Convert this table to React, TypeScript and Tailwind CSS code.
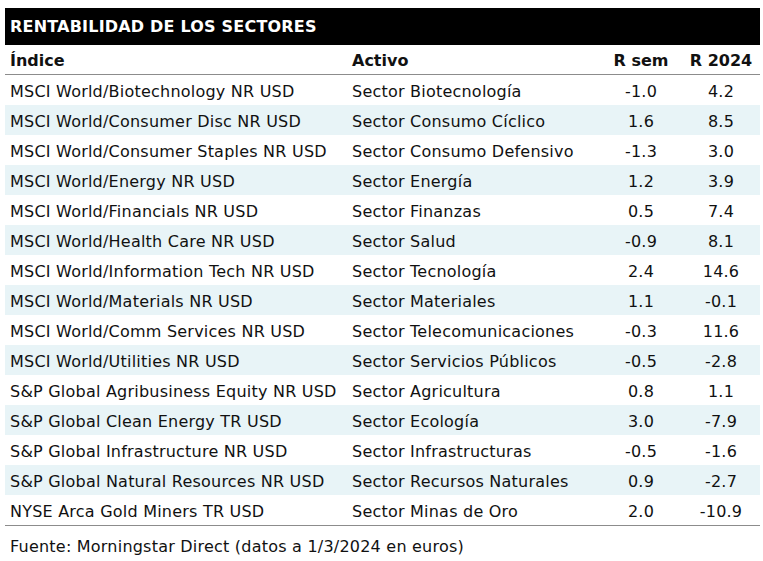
const rows: [string, string, string, string][] = [
  ["MSCI World/Biotechnology NR USD", "Sector Biotecnología", "-1.0", "4.2"],
  ["MSCI World/Consumer Disc NR USD", "Sector Consumo Cíclico", "1.6", "8.5"],
  ["MSCI World/Consumer Staples NR USD", "Sector Consumo Defensivo", "-1.3", "3.0"],
  ["MSCI World/Energy NR USD", "Sector Energía", "1.2", "3.9"],
  ["MSCI World/Financials NR USD", "Sector Finanzas", "0.5", "7.4"],
  ["MSCI World/Health Care NR USD", "Sector Salud", "-0.9", "8.1"],
  ["MSCI World/Information Tech NR USD", "Sector Tecnología", "2.4", "14.6"],
  ["MSCI World/Materials NR USD", "Sector Materiales", "1.1", "-0.1"],
  ["MSCI World/Comm Services NR USD", "Sector Telecomunicaciones", "-0.3", "11.6"],
  ["MSCI World/Utilities NR USD", "Sector Servicios Públicos", "-0.5", "-2.8"],
  ["S&P Global Agribusiness Equity NR USD", "Sector Agricultura", "0.8", "1.1"],
  ["S&P Global Clean Energy TR USD", "Sector Ecología", "3.0", "-7.9"],
  ["S&P Global Infrastructure NR USD", "Sector Infrastructuras", "-0.5", "-1.6"],
  ["S&P Global Natural Resources NR USD", "Sector Recursos Naturales", "0.9", "-2.7"],
  ["NYSE Arca Gold Miners TR USD", "Sector Minas de Oro", "2.0", "-10.9"],
];

export default function App() {
  return (
    <div className="w-[763px] h-[561px] bg-white pt-2 pl-[5px] pr-[3px] text-[16px] text-[#111] font-['DejaVu_Sans',Verdana,sans-serif]">
      <div className="h-[37px] bg-black text-white font-bold tracking-[0.2px] flex items-center pl-[5px] pt-[1px]">
        RENTABILIDAD DE LOS SECTORES
      </div>
      <div className="grid grid-cols-[347px_248px_82px_78px] h-[30px] items-center pt-[2px] font-bold border-b border-[#8c8c8c]">
        <div className="pl-[5px]">Índice</div>
        <div>Activo</div>
        <div className="text-center">R sem</div>
        <div className="text-center">R 2024</div>
      </div>
      <div className="border-b border-[#8c8c8c] tracking-[0.22px]">
        {rows.map((r, i) => (
          <div
            key={i}
            className={`grid grid-cols-[347px_248px_82px_78px] h-[30px] items-center pt-[3px] ${i % 2 === 1 ? "bg-[#e8f4f7]" : "bg-white"}`}
          >
            <div className="pl-[5px] whitespace-nowrap">{r[0]}</div>
            <div className="whitespace-nowrap">{r[1]}</div>
            <div className="text-center">{r[2]}</div>
            <div className="text-center">{r[3]}</div>
          </div>
        ))}
      </div>
      <div className="pl-[5px] pt-[9px] tracking-[0.22px]">Fuente: Morningstar Direct (datos a 1/3/2024 en euros)</div>
    </div>
  );
}
